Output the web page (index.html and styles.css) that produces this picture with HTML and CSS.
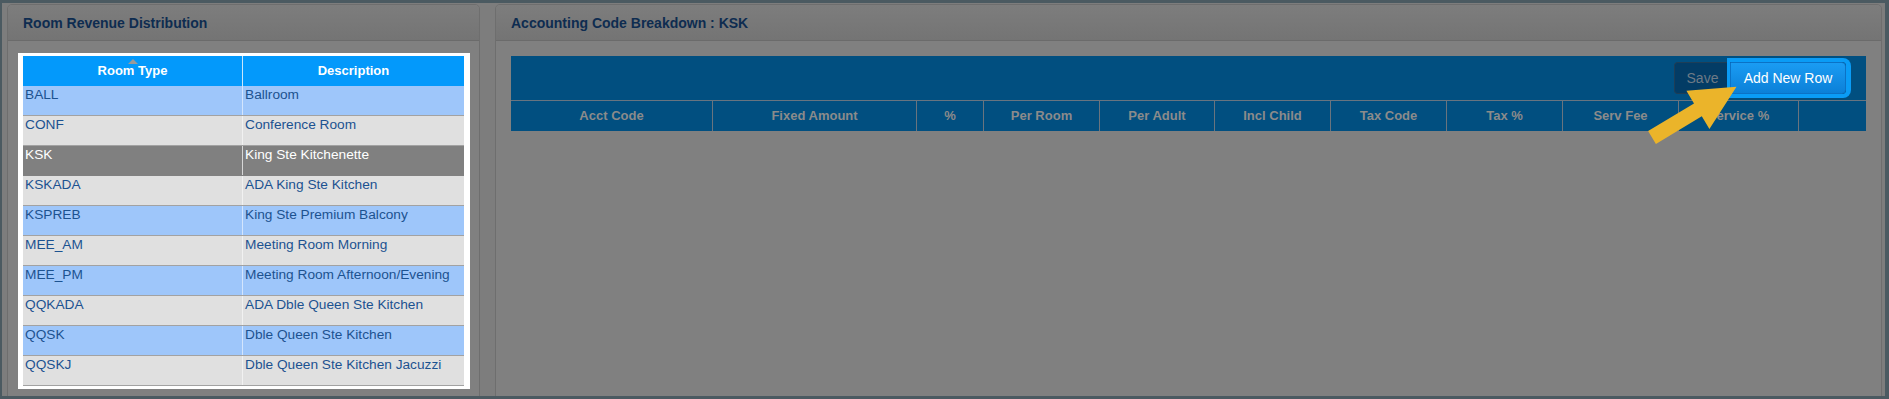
FILE: index.html
```html
<!DOCTYPE html>
<html>
<head>
<meta charset="utf-8">
<link rel="stylesheet" href="styles.css">
</head>
<body>
<div class="screen">
  <div class="panels">
    <section class="panel panel-left">
      <header class="panel-head">Room Revenue Distribution</header>
      <div class="panel-body">
        <div class="spot-frame">
          <div class="rooms">
            <div class="rooms-head">
              <div class="hcell sorted">Room Type</div>
              <div class="hcell">Description</div>
            </div>
            <div class="row alt"><div class="cell">BALL</div><div class="cell">Ballroom</div></div>
            <div class="row"><div class="cell">CONF</div><div class="cell">Conference Room</div></div>
            <div class="row selected"><div class="cell">KSK</div><div class="cell">King Ste Kitchenette</div></div>
            <div class="row"><div class="cell">KSKADA</div><div class="cell">ADA King Ste Kitchen</div></div>
            <div class="row alt"><div class="cell">KSPREB</div><div class="cell">King Ste Premium Balcony</div></div>
            <div class="row"><div class="cell">MEE_AM</div><div class="cell">Meeting Room Morning</div></div>
            <div class="row alt"><div class="cell">MEE_PM</div><div class="cell">Meeting Room Afternoon/Evening</div></div>
            <div class="row"><div class="cell">QQKADA</div><div class="cell">ADA Dble Queen Ste Kitchen</div></div>
            <div class="row alt"><div class="cell">QQSK</div><div class="cell">Dble Queen Ste Kitchen</div></div>
            <div class="row"><div class="cell">QQSKJ</div><div class="cell">Dble Queen Ste Kitchen Jacuzzi</div></div>
          </div>
        </div>
      </div>
    </section>
    <section class="panel panel-right">
      <header class="panel-head">Accounting Code Breakdown : KSK</header>
      <div class="panel-body">
        <div class="grid">
          <div class="toolbar">
            <div class="btn-group">
              <button class="btn btn-save">Save</button>
              <button class="btn btn-add">Add New Row</button>
            </div>
          </div>
          <div class="grid-head">
            <div class="gcell">Acct Code</div>
            <div class="gcell">Fixed Amount</div>
            <div class="gcell">%</div>
            <div class="gcell">Per Room</div>
            <div class="gcell">Per Adult</div>
            <div class="gcell">Incl Child</div>
            <div class="gcell">Tax Code</div>
            <div class="gcell">Tax %</div>
            <div class="gcell">Serv Fee</div>
            <div class="gcell">Service %</div>
            <div class="gcell"></div>
          </div>
        </div>
      </div>
    </section>
  </div>
</div>
<svg class="pointer" width="1889" height="399" viewBox="0 0 1889 399">
  <polygon points="1648.1,131.1 1694,103.5 1686.4,90.8 1736.5,86.7 1709.4,129 1701.8,116.3 1655.9,143.9" fill="#ebb42a"/>
</svg>
</body>
</html>
```
FILE: styles.css
```css
html, body {
  margin: 0;
  padding: 0;
}
body {
  background: #4b5a61;
  font-family: "Liberation Sans", Arial, sans-serif;
  width: 1889px;
  height: 399px;
  overflow: hidden;
  position: relative;
}
.screen {
  margin: 3px 4px 3px 2px;
  height: 393px;
  background: #7d7d7d;
  overflow: hidden;
}
.panels {
  display: flex;
  gap: 15px;
  padding: 1px 3px 0 5px;
}
.panel {
  box-sizing: border-box;
  height: 420px;
  border: 1px solid #6e6e6e;
  border-radius: 5px 5px 0 0;
  background: #808080;
}
.panel-left { width: 473px; }
.panel-right { width: 1387px; }
.panel-head {
  height: 35px;
  line-height: 36px;
  padding-left: 15px;
  background: linear-gradient(#7d7d7d, #747474);
  border-bottom: 1px solid #6b6b6b;
  border-radius: 4px 4px 0 0;
  font-size: 14px;
  font-weight: bold;
  color: #0e2c50;
}
.panel-left .panel-body {
  padding: 12px 0 0 10px;
}
.spot-frame {
  width: 441px;
  background: #ffffff;
  padding: 3px 6px 3px 5px;
}
.rooms-head {
  display: grid;
  grid-template-columns: 219px 222px;
  height: 30px;
  background: #0399fb;
}
.hcell {
  position: relative;
  color: #ffffff;
  font-size: 13px;
  font-weight: bold;
  text-align: center;
  line-height: 30px;
}
.hcell + .hcell {
  border-left: 1px solid #c9e6fb;
}
.hcell.sorted::before {
  content: "";
  position: absolute;
  top: 3px;
  left: 105px;
  border-left: 5px solid transparent;
  border-right: 5px solid transparent;
  border-bottom: 5px solid #9a9a9a;
}
.row {
  display: grid;
  grid-template-columns: 219px 222px;
  box-sizing: border-box;
  height: 30px;
  background: #e0e0e0;
  border-bottom: 1px solid #a2a2a2;
}
.row.alt {
  background: #9ec6fa;
}
.row.selected {
  background: #808080;
  border-bottom-color: #808080;
}
.cell {
  padding: 1px 2px 0 2px;
  font-size: 13.7px;
  line-height: 16px;
  color: #1c5290;
  white-space: nowrap;
}
.cell + .cell {
  border-left: 1px solid rgba(255, 255, 255, 0.55);
}
.row.selected .cell {
  color: #ffffff;
}
.row.selected .cell + .cell {
  border-left-color: #d6d6d6;
}
.panel-right .panel-body {
  padding: 15px 15px 0 15px;
}
.grid {
  background: #014f80;
}
.toolbar {
  height: 44px;
  border-bottom: 1px solid #687480;
  display: flex;
  justify-content: flex-end;
  align-items: center;
  padding-right: 20px;
}
.btn-group {
  display: flex;
}
.btn {
  box-sizing: border-box;
  height: 32px;
  margin: 0;
  font-family: "Liberation Sans", Arial, sans-serif;
  font-size: 14px;
  cursor: pointer;
}
.btn-save {
  width: 56px;
  background: #033c65;
  border: 1px solid #1e3e57;
  border-right: none;
  border-radius: 4px 0 0 4px;
  color: #6d7a86;
  padding: 0;
}
.btn-add {
  width: 116px;
  background: linear-gradient(#1a9cf3, #0b80d8);
  border: 1px solid #0b72c6;
  border-radius: 0 4px 4px 0;
  color: #ffffff;
  padding: 0;
  box-shadow: 1px 0 0 4px #0a9cf6;
}
.grid-head {
  display: grid;
  grid-template-columns: 202px 204px 67px 116px 115px 116px 116px 116px 116px 120px 67px;
  height: 30px;
}
.gcell {
  box-sizing: border-box;
  border-right: 1px solid #6a747e;
  color: #8b8b8b;
  font-size: 13px;
  font-weight: bold;
  text-align: center;
  line-height: 30px;
}
.gcell:last-child {
  border-right: none;
}
.pointer {
  position: absolute;
  top: 0;
  left: 0;
  pointer-events: none;
}
```
